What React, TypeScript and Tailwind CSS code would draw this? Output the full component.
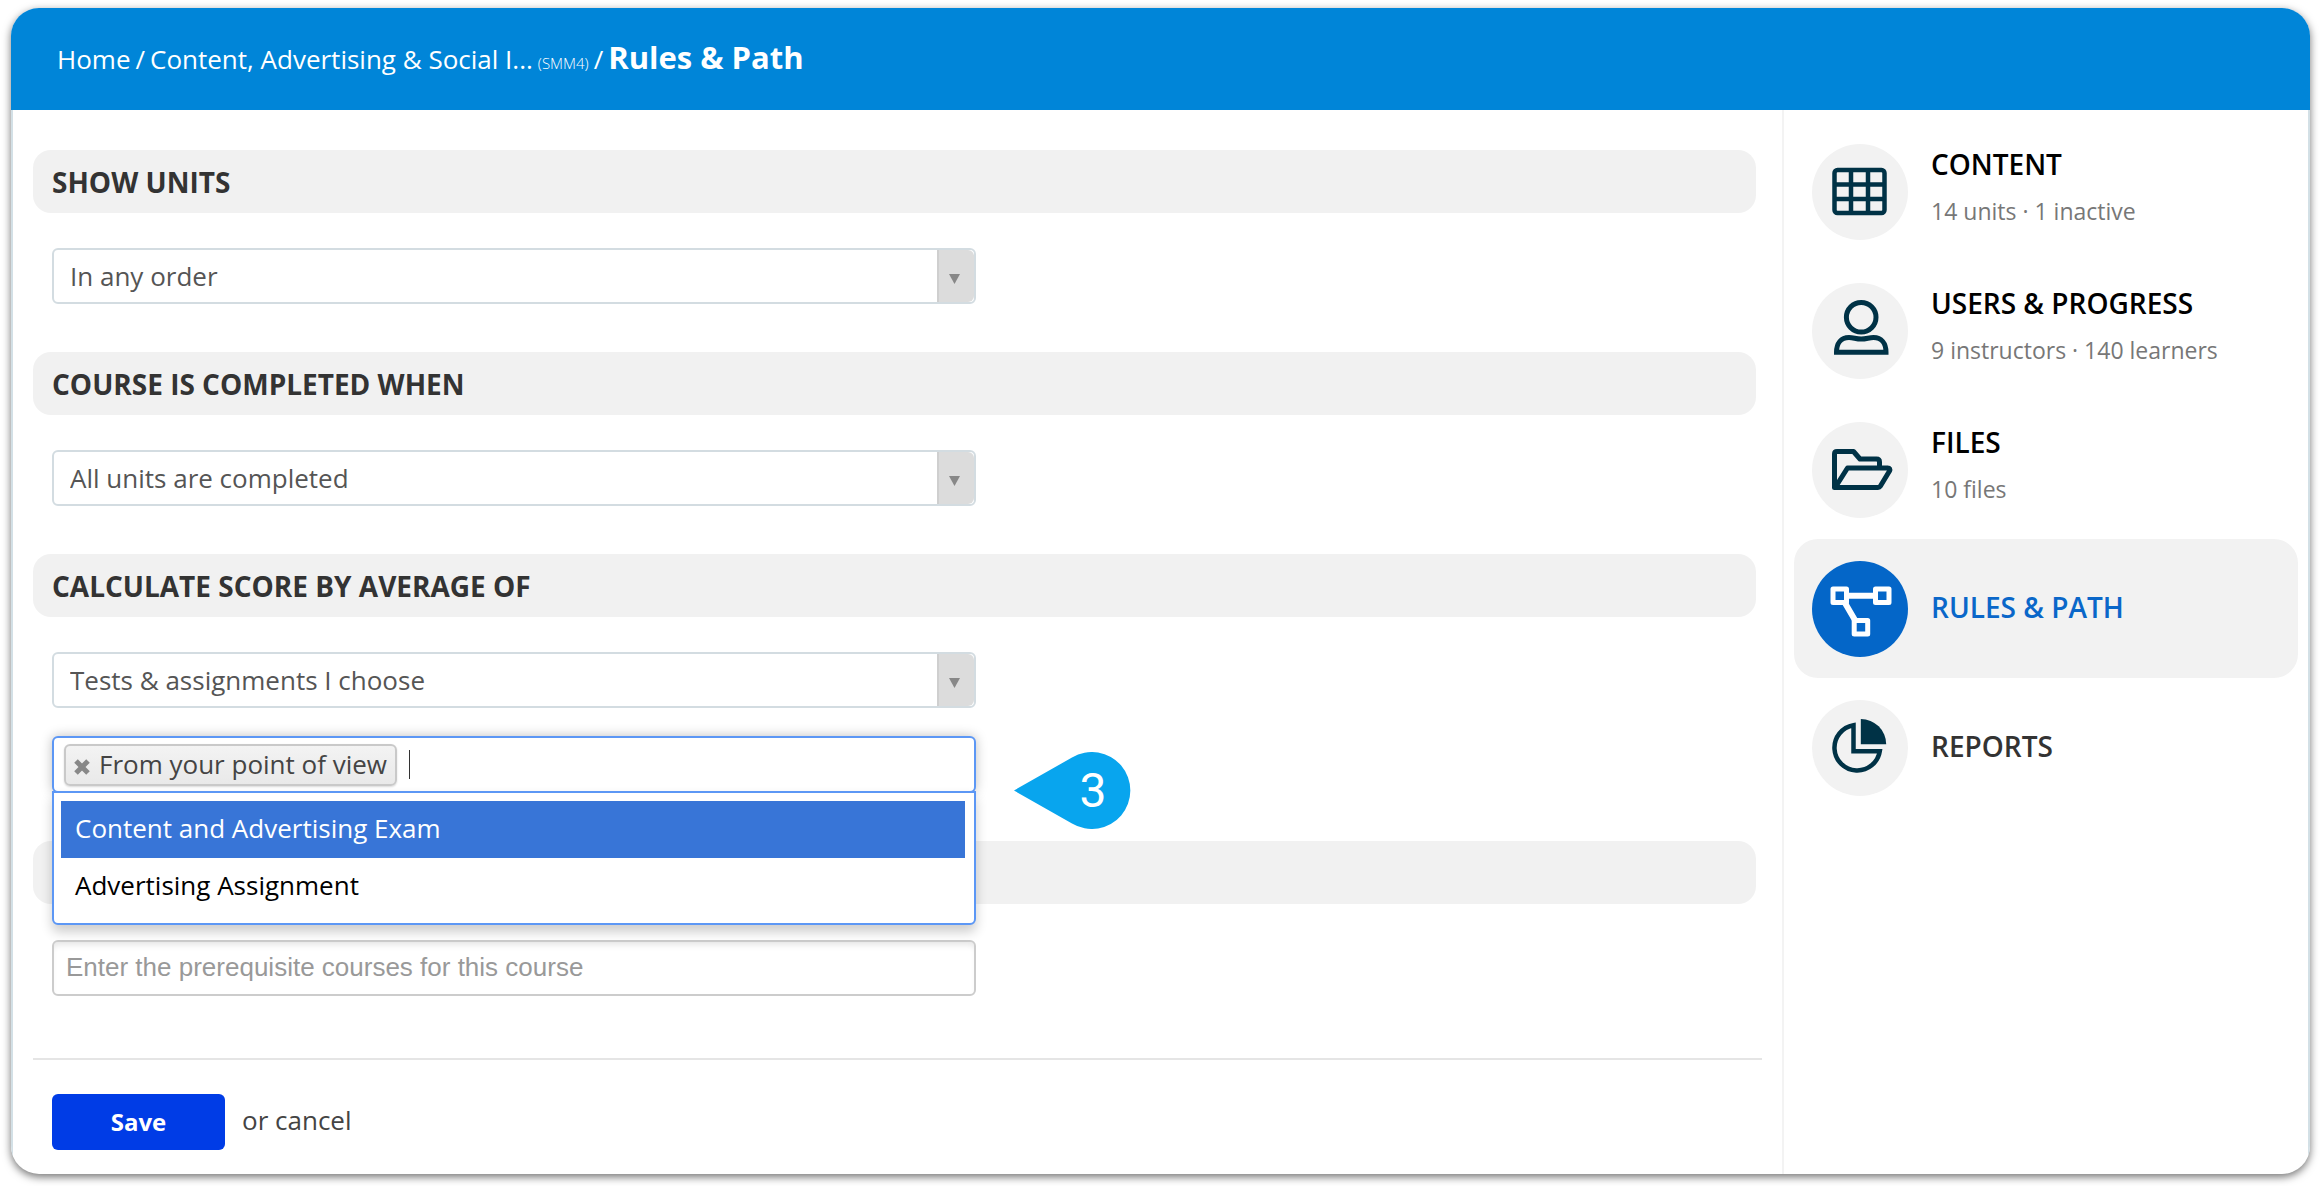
import type { ReactNode } from "react";

const ink = "#003246";

function GridIcon() {
  return (
    <svg viewBox="0 0 96 96" className="size-full" fill="none" stroke={ink} strokeWidth="4.500" aria-hidden="true">
      <rect x="22.500" y="26" width="50" height="43" rx="3" />
      <path d="M39 26v43M56 26v43M22.500 40.500h50M22.500 55h50" />
    </svg>
  );
}

function UserIcon() {
  return (
    <svg viewBox="0 0 96 96" className="size-full" fill="none" stroke={ink} strokeWidth="5" aria-hidden="true">
      <circle cx="49.200" cy="34.300" r="14.800" />
      <path d="M24.500 69.300h49.500c0-9-4.500-14.800-12.500-14.800-4.500 0-7 1.500-12.300 1.500S41.500 54.500 37 54.500c-8 0-12.500 5.800-12.500 14.800z" />
    </svg>
  );
}

function FolderIcon() {
  return (
    <svg viewBox="0 0 96 96" className="size-full" fill="none" stroke={ink} strokeWidth="5" strokeLinejoin="round" aria-hidden="true">
      <path d="M67.500 46v-6q0-3-3-3H48l-6.500-7.500H25q-2.500 0-2.500 2.500v33.500H66q1.500 0 2.300-1.300l9.200-15.200q1.200-3-1.800-3H35.500L23.500 65" />
    </svg>
  );
}

function PathIcon() {
  return (
    <svg viewBox="0 0 96 96" className="size-full" fill="none" stroke="#fff" strokeWidth="5" strokeLinejoin="round" aria-hidden="true">
      <rect x="21" y="28" width="13.500" height="13.500" />
      <rect x="63.500" y="28" width="13.500" height="13.500" />
      <rect x="42.200" y="59.500" width="13.500" height="13.500" />
      <path d="M35 34.800h28M33 42l10.500 18" strokeWidth="6" />
    </svg>
  );
}

function PieIcon() {
  return (
    <svg viewBox="0 0 96 96" className="size-full" aria-hidden="true">
      <path d="M41.500 25.200A22.800 22.800 0 1 0 67.800 51.200H41.500z" fill="none" stroke={ink} strokeWidth="4.500" />
      <path d="M48.800 19A25.400 25.400 0 0 1 74.200 44.200H48.800z" fill={ink} />
    </svg>
  );
}

function SectionTitle({ children }: { children: ReactNode }) {
  return (
    <h2 className="flex h-[63px] items-center rounded-[18px] bg-[#f1f1f1] px-[19px] text-[28px] font-bold text-[#333]">
      {children}
    </h2>
  );
}

function SelectBox({ label, value }: { label: string; value: string }) {
  return (
    <div className="relative h-14 w-full max-w-[924px]">
      <select
        aria-label={label}
        defaultValue={value}
        className="size-full appearance-none rounded-md border-2 border-[#d3dce1] bg-white pr-12 pl-4 text-[26px] text-[#555]"
      >
        <option>{value}</option>
      </select>
      <span className="pointer-events-none absolute inset-y-[2px] right-[2px] flex w-[37px] items-center justify-center rounded-r-md border-l-2 border-[#cfcfcf] bg-[#dcdcdc] pr-1">
        <svg viewBox="0 0 12 12" className="mt-1 size-[11px]" fill="#888" aria-hidden="true">
          <path d="M0 1h12L6 12z" />
        </svg>
      </span>
    </div>
  );
}

type Item = { title: string; detail?: string; icon: ReactNode; active?: boolean; tone: string };

const items: Item[] = [
  { title: "CONTENT", detail: "14 units · 1 inactive", icon: <GridIcon />, tone: "text-black" },
  { title: "USERS & PROGRESS", detail: "9 instructors · 140 learners", icon: <UserIcon />, tone: "text-black" },
  { title: "FILES", detail: "10 files", icon: <FolderIcon />, tone: "text-black" },
  { title: "RULES & PATH", icon: <PathIcon />, active: true, tone: "text-[#0a67c9]" },
  { title: "REPORTS", icon: <PieIcon />, tone: "text-[#333]" },
];

export default function App() {
  return (
    <div className="flex min-h-screen bg-white pt-2 pr-[10px] pb-3 pl-[11px] font-['Open_Sans',sans-serif]">
      <div className="flex flex-1 flex-col overflow-hidden rounded-[28px] bg-white shadow-[0_3px_9px_0_rgba(0,0,0,0.55)]">
        <header className="flex h-[102px] items-center bg-[#0085d8] px-[46px] pb-1 text-white">
          <nav aria-label="Breadcrumb" className="flex items-baseline gap-[5px] text-[26px]">
            <a href="#home">Home</a>
            <span>/</span>
            <a href="#course">Content, Advertising &amp; Social I...</a>
            <span className="text-[15px] font-light">(SMM4)</span>
            <span>/</span>
            <h1 className="text-[31px] font-bold">Rules &amp; Path</h1>
          </nav>
        </header>

        <div className="flex flex-1 border-x-2 border-[#d3e0e6]">
          <main className="flex-1 pt-10 pr-[26px] pl-5">
            <form>
              <SectionTitle>SHOW UNITS</SectionTitle>
              <div className="px-[19px] pt-[35px] pb-12">
                <SelectBox label="Show units" value="In any order" />
              </div>

              <SectionTitle>COURSE IS COMPLETED WHEN</SectionTitle>
              <div className="px-[19px] pt-[35px] pb-12">
                <SelectBox label="Course is completed when" value="All units are completed" />
              </div>

              <SectionTitle>CALCULATE SCORE BY AVERAGE OF</SectionTitle>
              <div className="px-[19px] pt-[35px] pb-12">
                <SelectBox label="Calculate score by average of" value="Tests & assignments I choose" />
                <div className="relative mt-7 w-full max-w-[924px] text-[26px]">
                  <div className="flex h-[57px] items-center rounded-md border-2 border-[#5c97f5] bg-white px-[10px] shadow-[0_0_12px_rgba(0,0,0,0.25)]">
                    <span className="flex h-[42px] items-center gap-[9px] rounded-md border-2 border-[#c9c9c9] bg-linear-to-b from-[#f3f3f3] to-[#e9e9e9] px-2 text-[#444] shadow-[0_1px_2px_rgba(0,0,0,0.15)]">
                      <button type="button" aria-label="Remove From your point of view" className="mt-1">
                        <svg viewBox="0 0 16 16" className="size-4" stroke="#888" strokeWidth="5" aria-hidden="true">
                          <path d="M2 2l12 12M14 2L2 14" />
                        </svg>
                      </button>
                      From your point of view
                    </span>
                    <span className="ml-3 h-[29px] w-px bg-[#333]" />
                    <input aria-label="Tests and assignments" className="h-full min-w-0 flex-1 outline-none" />
                  </div>
                  <ul className="absolute inset-x-0 top-full -mt-[2px] rounded-b-md border-2 border-[#5c97f5] bg-white pt-2 pr-[9px] pb-2 pl-[7px] shadow-[0_7px_12px_rgba(0,0,0,0.2)]">
                    <li>
                      <button type="button" className="h-[57px] w-full bg-[#3875d7] px-[14px] pb-[2px] text-left text-white">
                        Content and Advertising Exam
                      </button>
                    </li>
                    <li>
                      <button type="button" className="h-[57px] w-full px-[14px] pb-[2px] text-left text-black">
                        Advertising Assignment
                      </button>
                    </li>
                  </ul>
                  <div className="absolute top-4 left-full ml-[38px] h-[77px] w-[118px] font-['Roboto',sans-serif] text-[48px] text-white">
                    <svg viewBox="0 0 118 77" className="absolute inset-0 size-full" fill="#08a5ee" aria-hidden="true">
                      <path d="M0 38.500L58 5.500A38.500 38.500 0 1 1 58 71.500z" />
                    </svg>
                    <span className="relative flex h-full items-center justify-center pl-10">3</span>
                  </div>
                </div>
              </div>

              <SectionTitle>&nbsp;</SectionTitle>
              <div className="px-[19px] pt-9 pb-[62px]">
                <input
                  aria-label="Prerequisite courses"
                  placeholder="Enter the prerequisite courses for this course"
                  className="h-14 w-full max-w-[924px] rounded-md border-2 border-[#ccc] px-3 pb-[2px] font-['Liberation_Sans',sans-serif] text-[26px] shadow-[inset_0_6px_6px_-3px_rgba(0,0,0,0.1)] placeholder:text-[#999]"
                />
              </div>

              <div className="-mr-[6px] flex items-center gap-[17px] border-t-2 border-[#e5e5e5] px-[19px] pt-[34px] pb-6 text-[26px]">
                <button type="submit" className="h-14 w-[173px] rounded-md bg-[#003ce6] text-[24px] font-bold text-white">
                  Save
                </button>
                <span className="pb-1 text-[#444]">
                  or <a href="#cancel">cancel</a>
                </span>
              </div>
            </form>
          </main>

          <aside className="w-[526px] border-l-2 border-[#f3f3f3] px-[10px] pt-3">
            <nav aria-label="Course sections">
              {items.map((item) => (
                <a
                  key={item.title}
                  href="#section"
                  aria-current={item.active ? "page" : undefined}
                  className={
                    item.active
                      ? "flex h-[139px] items-center gap-[23px] rounded-3xl bg-[#f2f2f2] px-[18px]"
                      : "flex h-[139px] items-center gap-[23px] px-[18px]"
                  }
                >
                  <span className={item.active ? "size-24 rounded-full bg-[#0466c8]" : "size-24 rounded-full bg-[#f2f2f2]"}>
                    {item.icon}
                  </span>
                  <span className="flex flex-col gap-[11px] pb-1">
                    <span className={`text-[28px] leading-9 font-semibold ${item.tone}`}>{item.title}</span>
                    {item.detail && <span className="pb-1 text-[23px] leading-9 text-[#777]">{item.detail}</span>}
                  </span>
                </a>
              ))}
            </nav>
          </aside>
        </div>
      </div>
    </div>
  );
}
